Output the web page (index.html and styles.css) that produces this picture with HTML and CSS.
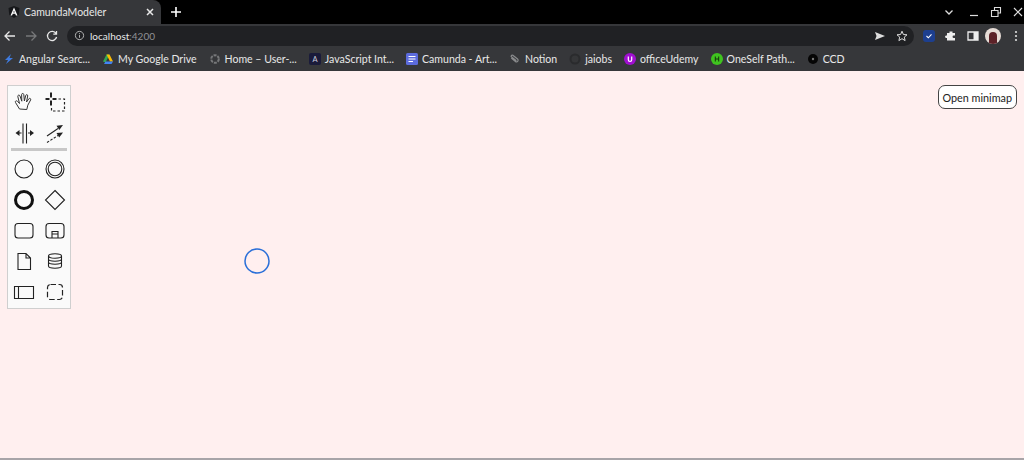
FILE: index.html
```html
<!DOCTYPE html>
<html>
<head>
<meta charset="utf-8" />
<title>CamundaModeler</title>
<link rel="stylesheet" href="styles.css">
</head>
<body>
<header class="chrome">
	<div class="tabstrip">
		<div class="tab">
			<svg class="tab-icon" viewBox="0 0 12 12"><path d="M6 0 .5 2l.8 7L6 12l4.700-3 .8-7z" fill="#16171a"/><path d="M6 1.500 2.500 9.500h1.600l.7-1.700h2.400l.7 1.700h1.600zM5.300 6.500 6 4.600l.7 1.900z" fill="#fff"/></svg>
			<span class="tab-title">CamundaModeler</span>
			<svg class="tab-close" viewBox="0 0 10 10"><path d="M2 2l6 6M8 2l-6 6" stroke="#e8e8e8" stroke-width="1.500"/></svg>
		</div>
		<svg class="new-tab" viewBox="0 0 12 12"><path d="M6 1v10M1 6h10" stroke="#fff" stroke-width="1.600"/></svg>
		<div class="window-controls">
			<svg class="win-chevron" viewBox="0 0 12 12"><path d="M2.500 4.500 6 8l3.500-3.500" fill="none" stroke="#ddd" stroke-width="1.300"/></svg>
			<svg viewBox="0 0 12 12"><path d="M2 9.500h8" stroke="#ddd" stroke-width="1.200"/></svg>
			<svg viewBox="0 0 12 12"><path d="M4.500 4V1.500h6V7H8M1.500 4.500H8v6H1.500z" fill="none" stroke="#ddd" stroke-width="1.100"/></svg>
			<svg viewBox="0 0 12 12"><path d="M2 2l8 8M10 2l-8 8" stroke="#ddd" stroke-width="1.200"/></svg>
		</div>
	</div>
	<div class="toolbar">
		<svg class="nav" viewBox="0 0 12 12"><path d="M11 6H1.500M5.500 1.500 1 6l4.500 4.500" fill="none" stroke="#e8e8e8" stroke-width="1.300"/></svg>
		<svg class="nav" viewBox="0 0 12 12"><path d="M1 6h9.500M6.500 1.500 11 6l-4.500 4.500" fill="none" stroke="#77787a" stroke-width="1.300"/></svg>
		<svg class="nav" viewBox="0 0 12 12"><path d="M10 3.500A4.600 4.600 0 1 0 10.600 7M10.500 1v3.200H7.300" fill="none" stroke="#e8e8e8" stroke-width="1.300"/></svg>
		<div class="omnibox">
			<svg class="info" viewBox="0 0 12 12"><circle cx="6" cy="6" r="4.500" fill="none" stroke="#bbb"/><path d="M6 5.500v3M6 3.500v1" stroke="#bbb"/></svg>
			<span class="host">localhost</span><span class="port">:4200</span>
			<span class="spacer"></span>
			<svg class="omni-icon" viewBox="0 0 12 12"><path d="M1 2l10 4-10 4 1.500-4z" fill="#ddd"/></svg>
			<svg class="omni-icon" viewBox="0 0 12 12"><path d="M6 1.200 7.400 4.500l3.600.3-2.700 2.300.8 3.500L6 8.700l-3.100 1.900.8-3.500L1 4.800l3.600-.3z" fill="none" stroke="#ddd"/></svg>
		</div>
		<div class="ext-badge"><svg viewBox="0 0 12 12"><path d="M3 6l2.200 2.200L9 4" fill="none" stroke="#fff" stroke-width="1.300"/></svg></div>
		<svg class="tool" viewBox="0 0 12 12"><path d="M4.500 1.500h3V3H10v2.500H8.800a1.200 1.200 0 0 0 0 2.500H10v2.500H2V8H1a1.300 1.300 0 0 1 0-2.500h1V3h2.500z" fill="#eee"/></svg>
		<svg class="tool" viewBox="0 0 12 12"><path d="M1 2h10v8H1z" fill="none" stroke="#eee" stroke-width="1.300"/><path d="M6.500 2H11v8H6.500z" fill="#eee"/></svg>
		<div class="avatar"><span class="avatar-face"></span></div>
		<svg class="menu" viewBox="0 0 4 12"><circle cx="2" cy="2" r="1.100" fill="#ddd"/><circle cx="2" cy="6" r="1.100" fill="#ddd"/><circle cx="2" cy="10" r="1.100" fill="#ddd"/></svg>
	</div>
	<nav class="bookmarks">
		<a class="mark"><svg viewBox="0 0 12 12"><path d="M8 1 2 7h3l-2 4 7-6H6.500z" fill="#3f7be0"/></svg>Angular Searc...</a>
		<a class="mark"><svg viewBox="0 0 12 12"><path d="M4.500 1.500h3L5 6.500l-1.500 3L1 8.500z" fill="#34a853"/><path d="M4.500 1.500h3l3.500 7H8z" fill="#fbbc04"/><path d="M3.500 8.500H11L9.500 11h-7.500z" fill="#4285f4"/></svg>My Google Drive</a>
		<a class="mark"><svg viewBox="0 0 12 12"><circle cx="6" cy="6" r="3.800" fill="none" stroke="#77787a" stroke-width="2" stroke-dasharray="3 1"/></svg>Home – User-...</a>
		<a class="mark"><svg viewBox="0 0 12 12"><rect width="12" height="12" rx="2" fill="#1a1b3a"/><text x="6" y="9" font-size="7.500" text-anchor="middle" fill="#ccd">A</text></svg>JavaScript Int...</a>
		<a class="mark"><svg viewBox="0 0 12 12"><rect width="12" height="12" rx="1.500" fill="#5c6bdc"/><path d="M2.500 3.500h7M2.500 6h7M2.500 8.500h4.500" stroke="#fff" stroke-width="1.200"/></svg>Camunda - Art...</a>
		<a class="mark"><svg viewBox="0 0 12 12"><path d="M2.500 4.500 6 8.500a1.500 1.500 0 0 0 2.500-2L4.500 2a1 1 0 0 0-1.500 1.500l4 4.500" transform="rotate(-10 6 6)" fill="none" stroke="#8a8b8d" stroke-width="1.200"/></svg>Notion</a>
		<a class="mark"><svg viewBox="0 0 12 12"><circle cx="6" cy="6" r="5.500" fill="#2a2b2d"/><circle cx="6" cy="6" r="3.500" fill="#353638"/></svg>jaiobs</a>
		<a class="mark"><svg viewBox="0 0 12 12"><circle cx="6" cy="6" r="6" fill="#a00fd0"/><path d="M4.300 3.500v3.300a1.700 1.700 0 0 0 3.400 0V3.500" fill="none" stroke="#fff" stroke-width="1.200"/></svg>officeUdemy</a>
		<a class="mark"><svg viewBox="0 0 12 12"><circle cx="6" cy="6" r="6" fill="#3fc31f"/><path d="M4.300 3.500v5M7.700 3.500v5M4.300 6h3.400" stroke="#14320c" stroke-width="1"/></svg>OneSelf Path...</a>
		<a class="mark"><svg viewBox="0 0 12 12"><circle cx="6" cy="6" r="5" fill="#050505"/><circle cx="6" cy="6" r="1.200" fill="#777"/></svg>CCD</a>
	</nav>
</header>
<main class="canvas">
	<div class="palette">
		<div class="palette-row">
			<svg viewBox="0 0 24 24"><path d="M7.500 19 3.500 12.500c-.8-1.400 1-2.300 2-1.200l2 2.200L5.800 6.500c-.3-1.500 1.700-2 2.200-.5l1.800 5.200L9.600 4.600c0-1.500 2.100-1.500 2.200 0l.6 6.400 1.300-5.500c.4-1.400 2.300-1 2 .5L14.500 12l2.300-3.200c.9-1.100 2.500 0 1.800 1.200l-2.800 5.200-1 4.300z" fill="none" stroke="#333" stroke-width="1"/></svg>
			<svg viewBox="0 0 24 24"><path d="M8 2.500v5M8 10.500v5M2.500 9h4M9.500 9h4" stroke="#222" stroke-width="2"/><path d="M15.500 9H21.500V21H8.500V17.500" fill="none" stroke="#222" stroke-width="1.200" stroke-dasharray="2.500 2"/></svg>
		</div>
		<div class="palette-row">
			<svg viewBox="0 0 24 24"><path d="M11 2.500v20M14.500 2.500v20" stroke="#222" stroke-width="1.100"/><path d="M7 12h2.500M16 12h2.500" stroke="#222" stroke-width="1.200"/><path d="M3.500 12 7.500 9v6zM22 12l-4-3v6z" fill="#222"/></svg>
			<svg viewBox="0 0 24 24"><path d="M4 15 15 7.500" stroke="#222" stroke-width="1.100"/><path d="M20 4l-6.500 .8 2.800 4.300z" fill="#222"/><path d="M4 21.500 15 14.500" stroke="#222" stroke-width="1.100" stroke-dasharray="2.500 1.500"/><path d="M20 11.500l-6.500 .6 2.700 4.300z" fill="#222"/></svg>
		</div>
		<div class="palette-sep"></div>
		<div class="palette-row">
			<svg viewBox="0 0 24 24"><circle cx="12" cy="12" r="9" fill="none" stroke="#222" stroke-width="1.100"/></svg>
			<svg viewBox="0 0 24 24"><circle cx="12" cy="12" r="9" fill="none" stroke="#222" stroke-width="1.100"/><circle cx="12" cy="12" r="6.800" fill="none" stroke="#222" stroke-width="1.100"/></svg>
		</div>
		<div class="palette-row">
			<svg viewBox="0 0 24 24"><circle cx="12" cy="12" r="8.500" fill="none" stroke="#111" stroke-width="3"/></svg>
			<svg viewBox="0 0 24 24"><path d="M12 2.500 21.500 12 12 21.500 2.500 12z" fill="none" stroke="#222" stroke-width="1.100"/></svg>
		</div>
		<div class="palette-row">
			<svg viewBox="0 0 24 24"><rect x="3" y="4.500" width="18" height="14.500" rx="3" fill="none" stroke="#222" stroke-width="1.100"/></svg>
			<svg viewBox="0 0 24 24"><rect x="3" y="4.500" width="18" height="14.500" rx="3" fill="none" stroke="#222" stroke-width="1.100"/><path d="M9 19v-6.500h6V19M9 15h6" fill="none" stroke="#222" stroke-width="1.100"/></svg>
		</div>
		<div class="palette-row">
			<svg viewBox="0 0 24 24"><path d="M6 3.500h8l4.500 4.500v11.500H6zM14 3.500V8h4.500" fill="none" stroke="#222" stroke-width="1.100"/></svg>
			<svg viewBox="0 0 24 24"><path d="M5.500 6v10c0 3 13 3 13 0V6M5.500 6c0-3 13-3 13 0s-13 3-13 0M5.500 9c0 3 13 3 13 0M5.500 12c0 3 13 3 13 0" fill="none" stroke="#222" stroke-width="1.100"/></svg>
		</div>
		<div class="palette-row">
			<svg viewBox="0 0 24 24"><path d="M2.500 5.500h19v12h-19zM6.500 5.500v12" fill="none" stroke="#222" stroke-width="1.100"/></svg>
			<svg viewBox="0 0 24 24"><rect x="4.500" y="3.500" width="15" height="15" rx="3" fill="none" stroke="#222" stroke-width="1.200" stroke-dasharray="5.500 2.500"/></svg>
		</div>
	</div>
	<svg class="start-event" viewBox="0 0 28 28"><circle cx="14" cy="14" r="12" fill="none" stroke="#2a6fd8" stroke-width="1.500"/></svg>
	<button class="minimap-btn">Open minimap</button>
</main>
</body>
</html>
```

FILE: styles.css
```css
html, body{
	margin:0;
	height:100%;
	overflow:hidden;
}
body{
	display:flex;
	flex-direction:column;
	background:#ffefef;
	font-family:Lato, "Noto Sans", sans-serif;
}
svg{
	display:block;
	flex:none;
}

/* browser chrome */
.chrome{
	flex:none;
	background:#36373a;
	color:#e8e8e8;
}
.tabstrip{
	display:flex;
	align-items:center;
	height:24px;
	background:#000;
}
.tab{
	display:flex;
	align-items:center;
	box-sizing:border-box;
	width:161px;
	height:24px;
	padding:0 6px 0 8px;
	background:#36373a;
	border-top-right-radius:8px;
}
.tab-icon{
	width:12px;
	height:12px;
}
.tab-title{
	margin-left:4px;
	font-size:10.500px;
	flex:1;
}
.tab-close{
	width:10px;
	height:10px;
}
.new-tab{
	width:12px;
	height:12px;
	margin-left:9px;
}
.window-controls{
	display:flex;
	gap:10px;
	margin-left:auto;
}
.window-controls svg{
	width:12px;
	height:12px;
}
.window-controls .win-chevron{
	margin-right:3px;
}
.toolbar{
	display:flex;
	align-items:center;
	height:23px;
	padding:0 4px;
}
.nav{
	width:12px;
	height:12px;
	margin-right:9px;
}
.omnibox{
	display:flex;
	align-items:center;
	width:847px;
	height:20px;
	padding:0 6px 0 7px;
	box-sizing:border-box;
	background:#202124;
	border-radius:10px;
	font-size:10px;
}
.info{
	width:11px;
	height:11px;
	margin-right:5px;
}
.host{
	color:#e8e8e8;
}
.port{
	color:#8f9094;
}
.spacer{
	flex:1;
}
.omni-icon{
	width:12px;
	height:12px;
	margin-left:10px;
}
.ext-badge{
	display:flex;
	align-items:center;
	justify-content:center;
	width:12px;
	height:12px;
	margin-left:9px;
	background:#1d3f8f;
	border-radius:3px;
}
.ext-badge svg{
	width:10px;
	height:10px;
}
.tool{
	width:12px;
	height:12px;
	margin-left:10px;
}
.avatar{
	width:16px;
	height:16px;
	margin-left:6px;
	border-radius:50%;
	background:#e6dcd6;
	overflow:hidden;
	display:flex;
	align-items:flex-end;
	justify-content:center;
}
.avatar-face{
	width:8px;
	height:12px;
	border-radius:4px 4px 0 0;
	background:#5c2228;
}
.menu{
	width:4px;
	height:12px;
	margin-left:13px;
}
.bookmarks{
	display:flex;
	align-items:center;
	height:24px;
	padding-left:3px;
	font-size:10.550px;
}
.mark{
	display:flex;
	align-items:center;
	gap:4px;
	margin-right:12px;
	white-space:nowrap;
}
.mark svg{
	width:12px;
	height:12px;
}

/* modeler */
.canvas{
	position:relative;
	flex:1;
	border-bottom:2px solid #a8a4a8;
}
.palette{
	position:absolute;
	left:7px;
	top:14px;
	width:62px;
	background:#fafafa;
	border:1px solid #cfcfcf;
	display:flex;
	flex-direction:column;
}
.palette-row{
	display:flex;
	justify-content:center;
	gap:7px;
	height:31px;
	align-items:center;
}
.palette-row svg{
	width:24px;
	height:24px;
}
.palette-sep{
	height:3px;
	margin:0 3px 2px;
	background:#c8c8c8;
}
.start-event{
	position:absolute;
	left:243px;
	top:176px;
	width:28px;
	height:28px;
}
.minimap-btn{
	position:absolute;
	right:7px;
	top:14px;
	height:24px;
	padding:0 4px;
	background:#fff;
	border:1px solid #444;
	border-radius:7px;
	font:10.800px Lato, "Noto Sans", sans-serif;
	color:#222;
}
```
